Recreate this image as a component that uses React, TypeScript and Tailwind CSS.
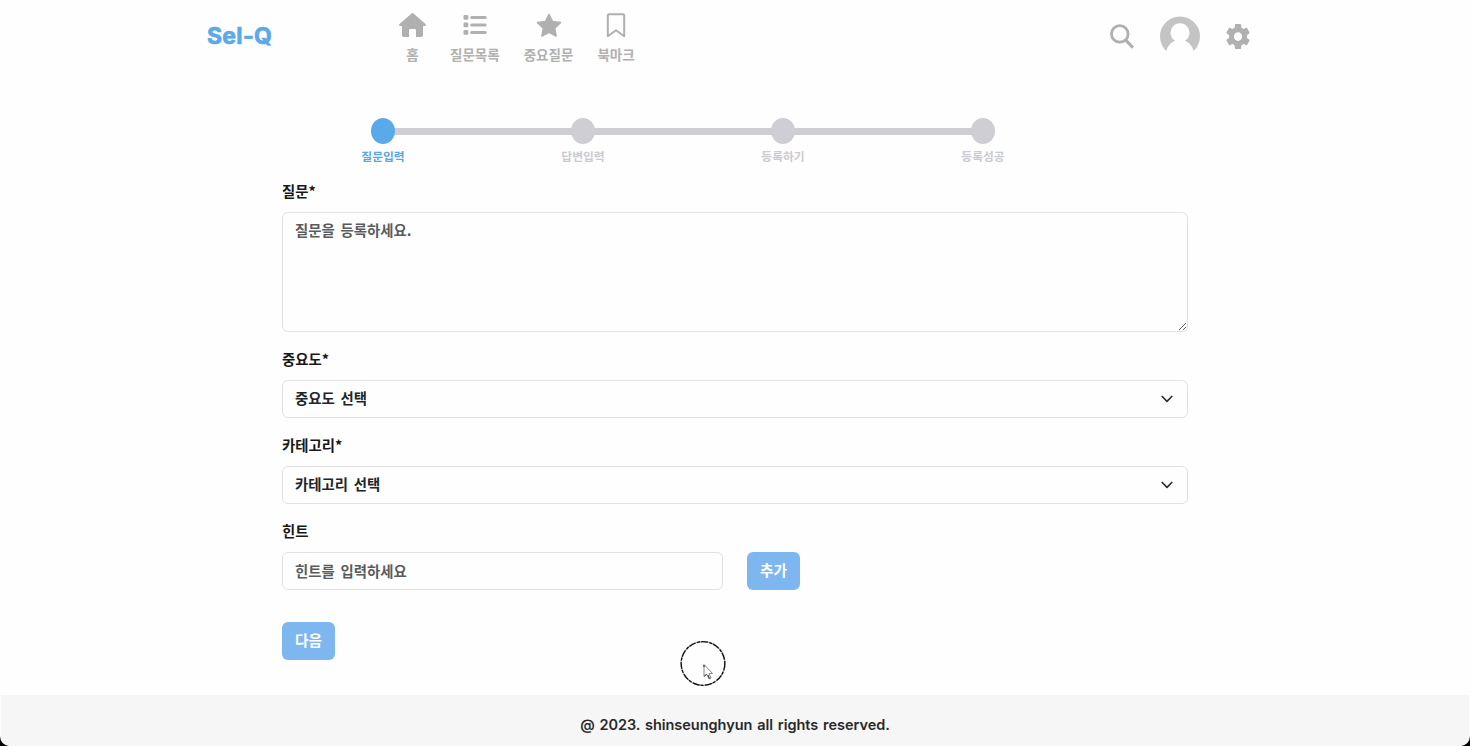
import type { ReactNode } from "react";

function NavItem({ label, children }: { label: string; children: ReactNode }) {
  return (
    <a className="flex flex-col items-center">
      <span className="flex h-[26px] items-center justify-center">{children}</span>
      <span className="mt-[6px] text-[13.5px] leading-5 font-bold whitespace-nowrap">{label}</span>
    </a>
  );
}

function HomeIcon() {
  return (
    <svg width="27" height="24" viewBox="0 0 27 24" fill="currentColor">
      <path d="M12.5.4a1.6 1.6 0 0 1 2 0L26.5 11c.8.8.4 2-.7 2H24v9c0 1.1-.8 2-2 2h-5v-6.4c0-.9-.6-1.6-1.5-1.6h-4c-.9 0-1.5.7-1.5 1.6V24H5c-1.200 0-2-.9-2-2v-9H1.200c-1.100 0-1.500-1.200-.7-2z" />
    </svg>
  );
}

function ListIcon() {
  return (
    <svg width="24" height="22" viewBox="0 0 24 22" fill="currentColor">
      {[1, 8.5, 16].map((y) => (
        <g key={y}>
          <rect x="0.500" y={y} width="4.800" height="4.800" rx="1.200" />
          <rect x="7.200" y={y + 0.9} width="16.500" height="3" rx="1.500" />
        </g>
      ))}
    </svg>
  );
}

function StarIcon() {
  return (
    <svg width="26" height="25" viewBox="0 0 26 25" fill="currentColor" stroke="currentColor" strokeWidth="1.500" strokeLinejoin="round">
      <path d="M13 1.300l3.500 7.200 8 1.100-5.800 5.500 1.400 8-7.100-3.800-7.100 3.800 1.400-8-5.800-5.500 8-1.100z" />
    </svg>
  );
}

function BookmarkIcon() {
  return (
    <svg width="20" height="25" viewBox="0 0 20 25" fill="none" stroke="currentColor" strokeWidth="2" strokeLinejoin="round">
      <path d="M3 1.200h14c.8 0 1.200.5 1.200 1.200v20.800L10 17.200l-8.200 6V2.400c0-.7.4-1.200 1.200-1.200z" />
    </svg>
  );
}

function SearchIcon() {
  return (
    <svg width="24" height="25" viewBox="0 0 24 25" fill="none" stroke="currentColor">
      <circle cx="9.800" cy="9.900" r="8.300" strokeWidth="2.800" />
      <path d="M15.800 16.200l7.200 7.500" strokeWidth="3.200" />
    </svg>
  );
}

function Avatar() {
  return (
    <svg width="40" height="40" viewBox="0 0 40 40">
      <path
        d="M6.300 35A20 20 0 1 1 33.700 35C32.500 30.500 29.500 26.500 25 24.700a9.400 9.400 0 1 0-10 0C10.500 26.500 7.500 30.500 6.300 35z"
        fill="#c4c4c4"
      />
    </svg>
  );
}

function GearIcon() {
  return (
    <svg width="24" height="25" viewBox="1.900 2 20.200 20" preserveAspectRatio="none" fill="currentColor">
      <path d="M19.430 12.980c.040-.320.070-.640.070-.980s-.030-.660-.070-.980l2.110-1.650c.190-.150.240-.420.120-.640l-2-3.460c-.120-.220-.390-.300-.610-.220l-2.490 1c-.520-.400-1.080-.730-1.690-.980l-.380-2.650C14.460 2.180 14.250 2 14 2h-4c-.250 0-.460.180-.490.420l-.380 2.650c-.610.250-1.170.590-1.690.980l-2.490-1c-.230-.090-.490 0-.610.220l-2 3.460c-.130.220-.070.490.120.640l2.110 1.650c-.040.320-.070.650-.070.980s.030.660.070.980l-2.110 1.650c-.190.150-.240.420-.120.640l2 3.460c.120.220.390.300.610.220l2.490-1c.520.400 1.080.730 1.690.980l.380 2.650c.030.240.240.420.490.420h4c.250 0 .460-.180.490-.420l.380-2.650c.610-.250 1.170-.590 1.690-.980l2.490 1c.230.090.490 0 .610-.220l2-3.460c.120-.220.070-.490-.120-.640l-2.110-1.650zM12 15.500c-1.930 0-3.500-1.570-3.500-3.500s1.570-3.500 3.500-3.500 3.500 1.570 3.500 3.500-1.570 3.500-3.500 3.500z" />
    </svg>
  );
}

const steps = ["질문입력", "답변입력", "등록하기", "등록성공"];

function Stepper() {
  return (
    <ol className="ml-[371px] flex pt-[46px]">
      {steps.map((step, i) => (
        <li key={step} className={i < steps.length - 1 ? "w-[200px]" : "w-6"}>
          <div className="flex items-center">
            <span className={`relative h-[26px] w-6 shrink-0 rounded-[50%] ${i === 0 ? "bg-[#5aaaea]" : "bg-[#cfced5]"}`} />
            {i < steps.length - 1 && <span className="-mx-px h-[7px] flex-1 bg-[#cfced5]" />}
          </div>
          <div className="flex h-[22px] w-6 justify-center">
            <span
              className={`mt-[3px] text-[11.800px] leading-[18px] font-bold whitespace-nowrap ${i === 0 ? "text-[#5aa7e6]" : "text-[#cbcbcf]"}`}
            >
              {step}
            </span>
          </div>
        </li>
      ))}
    </ol>
  );
}

function Label({ children }: { children: ReactNode }) {
  return <label className="mb-2 block h-6 text-[14.400px] leading-[22px] font-bold text-[#181818]">{children}</label>;
}

function SelectBox({ text }: { text: string }) {
  return (
    <button type="button" className="flex h-[38px] w-full items-center justify-between rounded-md border border-[#e0e1e3] pr-[14px] pl-3 text-[14.400px] font-bold text-[#212529] [word-spacing:2.500px]">
      <span className="pb-0.5">{text}</span>
      <svg width="12" height="8" viewBox="0 0 12 8" fill="none" stroke="#2b2f33" strokeWidth="1.700" strokeLinecap="round" strokeLinejoin="round">
        <path d="M1.200 1.500L6 6.300l4.800-4.800" />
      </svg>
    </button>
  );
}

export default function App() {
  return (
    <div className="h-[746px] w-full overflow-hidden bg-black font-['Noto_Sans_CJK_KR',sans-serif]">
      <div className="relative flex h-full flex-col overflow-hidden rounded-b-[10px] bg-[#fefefe]">
        <header className="flex h-[72px] shrink-0 pl-[207px] text-[#b0b0b0]">
          <h1 className="w-[192px] pt-[20px] font-['Inter','Noto_Sans_CJK_KR',sans-serif] text-[23px] leading-8 font-bold tracking-[0.300px] text-[#5aa9e8] [-webkit-text-stroke:0.700px_#5aa9e8]">
            Sel-Q
          </h1>
          <nav className="flex gap-6 pt-3">
            <NavItem label="홈"><HomeIcon /></NavItem>
            <NavItem label="질문목록"><ListIcon /></NavItem>
            <NavItem label="중요질문"><StarIcon /></NavItem>
            <NavItem label="북마크"><BookmarkIcon /></NavItem>
          </nav>
          <div className="mr-[220px] ml-auto flex items-center gap-[26px]">
            <SearchIcon />
            <Avatar />
            <GearIcon />
          </div>
        </header>

        <Stepper />

        <form className="ml-[282px] w-[906px] pt-[14px]">
          <Label>질문*</Label>
          <textarea
            placeholder="질문을 등록하세요."
            className="mb-4 block h-[120px] w-full resize-y rounded-md border border-[#e0e1e3] px-3 pt-[5px] text-[14.400px] leading-6 font-bold [word-spacing:2.500px] placeholder:text-[#595c5f]"
          />
          <Label>중요도*</Label>
          <div className="mb-4"><SelectBox text="중요도 선택" /></div>
          <Label>카테고리*</Label>
          <div className="mb-4"><SelectBox text="카테고리 선택" /></div>
          <Label>힌트</Label>
          <div className="mb-8 flex gap-6">
            <input
              placeholder="힌트를 입력하세요"
              className="h-[38px] w-[441px] rounded-md border border-[#e0e1e3] px-3 pb-0.5 text-[14.400px] font-bold [word-spacing:2.500px] placeholder:text-[#595c5f]"
            />
            <button type="button" className="h-[38px] w-[53px] rounded-md bg-[#7eb7f0] pb-0.5 text-[14.700px] font-bold text-white">추가</button>
          </div>
          <button type="button" className="block h-[38px] w-[53px] rounded-md bg-[#7eb7f0] pb-0.5 text-[14.700px] font-bold text-white">다음</button>
        </form>

        <footer className="mx-px mt-auto flex h-[51px] shrink-0 items-center justify-center bg-[#f6f6f6] pt-2 font-['Inter','Noto_Sans_CJK_KR',sans-serif] text-[14.500px] font-semibold tracking-[-0.030px] whitespace-nowrap text-[#292929] [word-spacing:1.200px]">
          @ 2023. shinseunghyun all rights reserved.
        </footer>

        <svg className="absolute top-[641px] left-[680px]" width="46" height="46" viewBox="0 0 46 46" fill="none">
          <circle cx="23" cy="22.500" r="22" stroke="#aaa" strokeWidth="1.400" />
          <circle cx="23" cy="22.500" r="21.800" stroke="#111" strokeWidth="1.300" strokeDasharray="7 1.500 3 1" />
          <path d="M24 23.500v12l2.700-2.300 2.300 4.800 2.100-1-2.100-4.500h3.600z" fill="#fff" stroke="#888" strokeWidth="1" strokeLinejoin="round" />
          <path d="M24 24v2M24.500 35l2-1.500M28 34l1.500 3.500" stroke="#222" strokeWidth="1" />
        </svg>
      </div>
    </div>
  );
}
